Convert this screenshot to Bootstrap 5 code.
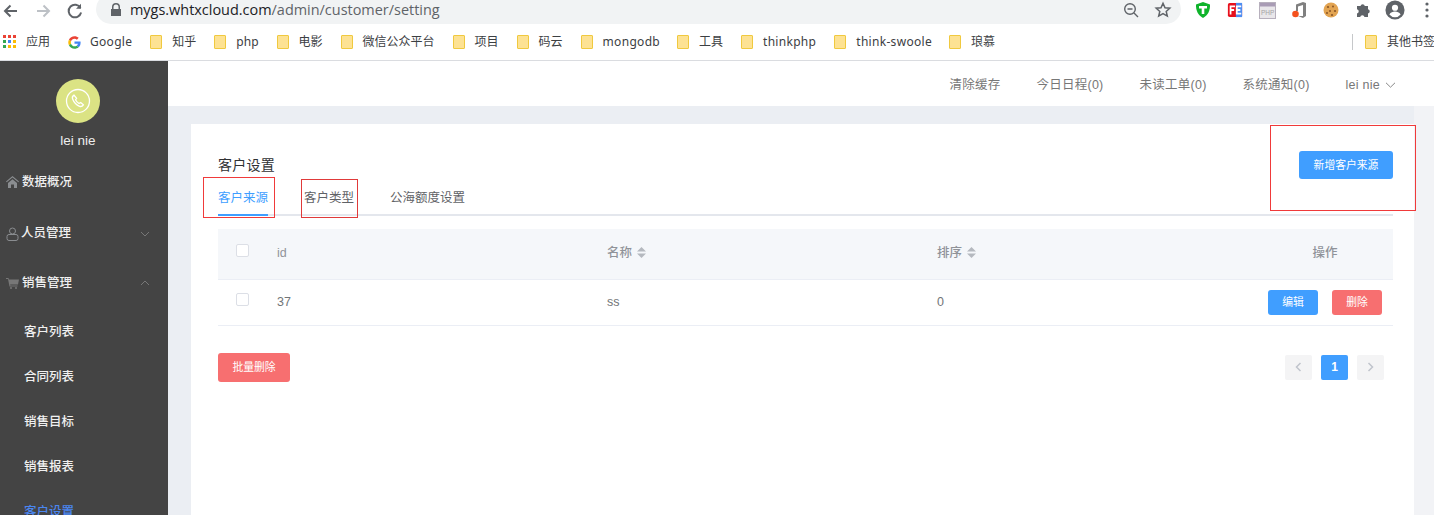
<!DOCTYPE html>
<html lang="zh">
<head>
<meta charset="utf-8">
<title>客户设置</title>
<link href="https://cdn.jsdelivr.net/npm/bootstrap@5.3.0/dist/css/bootstrap.min.css" rel="stylesheet">
<style>
html,body{height:515px;overflow:hidden}
body{font-family:"Liberation Sans","Noto Sans CJK SC",sans-serif;background:#fff;color:#606266;font-size:12.5px}
.tool-bar{height:24px;background:#fff;overflow:hidden}
.nav-ico{width:20px;height:20px;flex:none}
.addr-pill{width:1085px;height:30px;margin-top:-6px;background:#f1f3f4;border-radius:15px;padding:6px 9px 0 12px;color:#5f6368;font-family:"Open Sans","Noto Sans",sans-serif;font-size:14.45px;line-height:20px}
.addr-pill b{font-weight:400;color:#202124}
.ext-slot{width:32px;height:20px;flex:none;display:flex;align-items:center;justify-content:center}
.mark-bar{height:37px;padding-left:2px;border-bottom:1px solid #dadce0;font-family:"Noto Sans","Noto Sans CJK SC",sans-serif;font-size:12px;color:#3c4043}
.mark-item{display:flex;align-items:center;white-space:nowrap;flex:none}
.mark-latin{letter-spacing:.3px}
.folder{width:12px;height:14px;background:#fde293;border:1px solid #f0c93f;border-radius:1px;flex:none;margin-right:10px}
.mark-sep{width:1px;height:16px;background:#c6c8ca;margin:0 12px 0 0}
.app-shell{height:454px}
.side-nav{width:168px;flex:none;background:#444;color:#eee;overflow:hidden}
.avatar-dot{width:44px;height:44px;border-radius:50%;background:#dbe384;margin:18px 0 0 56px;display:flex;align-items:center;justify-content:center}
.who{width:156px;text-align:center;font-size:13.5px;line-height:18px;margin:9px 0 7px;color:#eee;height:18px}
.side-item{height:50px;display:flex;align-items:center;padding-left:6px;color:#f0f0f0;font-weight:500}
.side-item.tall{height:51px;padding-top:2px}
.side-item svg.lead-ico{margin-right:3px;flex:none}
.side-item .chev{margin-left:auto;margin-right:18px}
.side-sub{height:45px;display:flex;align-items:center;padding-left:24px;color:#f0f0f0;font-weight:500}
.side-sub.first{margin-top:2px}
.side-sub.on{color:#4a86f0}
.main-area{flex:1 1 0;min-width:0;background:#ebeef3}
.top-strip{height:45px;background:#fff;padding:3px 38px 0 0;color:#777;gap:36px;letter-spacing:.25px}
.content-row{height:409px;padding:18px 0 0 23px;background:linear-gradient(90deg,#ebeef3 1246px,#f2f3f6 1246px)}
.sheet{width:1223px;height:400px;background:#fff;padding:27px 21px 0 27px}
.sheet-title{font-size:14px;letter-spacing:.25px;color:#303133;line-height:20px;margin-top:4px;font-weight:400}
.tab-line{border-bottom:2px solid #e4e7ed;height:35px;gap:36px;margin-top:-18px;width:1175px}
.tab-one{height:35px;line-height:20px;padding-top:7px;color:#5f6266;flex:none}
.tab-one.on{color:#409eff;border-bottom:2px solid #409eff}
.data-grid{width:1175px;margin:13px 0 0;table-layout:fixed;border-collapse:collapse}
.data-grid th{height:50px;background:#f5f7fa;color:#909399;font-weight:500;vertical-align:middle;border-bottom:1px solid #ebeef5;padding:0}
.data-grid td{height:46px;color:#727578;vertical-align:middle;border-bottom:1px solid #ebeef5;padding:0;font-size:12.5px}
.tick{display:block;width:13px;height:13px;border:1px solid #dcdfe6;border-radius:2px;background:#fff;margin:-6px 0 0 18px}
.sort-arrows{display:inline-block;margin-left:5px;vertical-align:-1px}
.btn-flat{border:0;border-radius:3px;color:#fff;font-size:10.8px;line-height:1;padding:0}
.btn-blue{background:#409eff}
.btn-red{background:#f76f70}
.btn-add{width:94px;height:28px}
.btn-row{width:50px;height:25px}
.btn-bulk{width:72px;height:29px}
.foot-row{margin-top:27px;width:1175px}
.pager{gap:9px;margin-right:9px}
.page-cell{width:27px;height:25px;border-radius:2px;background:#f4f4f5;color:#c0c4cc;display:flex;align-items:center;justify-content:center;font-weight:700;font-size:12px}
.page-cell.on{background:#409eff;color:#fff}
.note-box{position:absolute;border:1px solid #f03a3a;pointer-events:none}
.note-a{left:203px;top:177px;width:72px;height:41px}
.note-b{left:301px;top:179px;width:57px;height:39px;border-color:#e03a3a}
.note-c{left:1270px;top:125px;width:146px;height:86px}
</style>
</head>
<body>
<div class="tool-bar d-flex align-items-start">
  <div class="d-flex" style="gap:12px;padding:1px 0 0 1px;width:96px">
    <svg class="nav-ico" viewBox="0 0 20 20" fill="none" stroke="#5f6368" stroke-width="2"><path d="M16 10H4M9.500 4.500 4 10l5.500 5.500"/></svg>
    <svg class="nav-ico" viewBox="0 0 20 20" fill="none" stroke="#bdc1c6" stroke-width="2"><path d="M4 10h12M10.500 4.500 16 10l-5.500 5.500"/></svg>
    <svg class="nav-ico" viewBox="0 0 20 20" fill="none" stroke="#5f6368" stroke-width="2"><path d="M15.500 7a6.300 6.300 0 1 0 .6 4.500"/><path d="M16 2.800v5h-5" fill="#5f6368" stroke="none"/></svg>
  </div>
  <div class="addr-pill d-flex align-items-start flex-shrink-0">
    <svg width="12" height="14" viewBox="0 0 12 14" style="margin:3px 8px 0 2px;flex:none"><path fill="#5f6368" d="M2 6V4a4 4 0 0 1 8 0v2h1v7H1V6zm1.500 0h5V4a2.500 2.500 0 0 0-5 0z"/></svg>
    <span><b>mygs.whtxcloud.com</b>/admin/customer/setting</span>
    <svg class="ms-auto" width="18" height="18" viewBox="0 0 18 18" fill="none" stroke="#5f6368" stroke-width="1.400" style="margin:1px 14px 0 0;flex:none"><circle cx="8" cy="8" r="5.300"/><path d="m12 12 4 4M5.500 8h5"/></svg>
    <svg width="18" height="18" viewBox="0 0 18 18" fill="none" stroke="#5f6368" stroke-width="1.500" style="margin:1px 0 0 0;flex:none"><path d="m9 2.300 2 4.500 4.800.4-3.600 3.200 1.100 4.700L9 12.600l-4.300 2.500 1.100-4.700L2.200 7.200 7 6.800z"/></svg>
  </div>
  <div class="d-flex align-items-center flex-shrink-0" style="padding:0 0 0 6px">
    <span class="ext-slot"><svg width="18" height="18" viewBox="0 0 18 18"><path fill="#0fb32b" d="M9 1l7 2.500c.2 6-1.800 10.500-7 13.500C3.800 14 1.800 9.500 2 3.500z"/><path fill="#fff" d="M5 5h8v2.500h-2.700V13H7.700V7.500H5z"/></svg></span>
    <span class="ext-slot"><svg width="16" height="16" viewBox="0 0 18 18"><rect x="1" y="1" width="16" height="16" rx="2" fill="#e8101c"/><rect x="10" y="1" width="7" height="16" fill="#4f8df0"/><path fill="#fff" d="M3 4h6v2H5v2h3v2H5v4H3zM10 4h6v2h-4v2h3v2h-3v2h4v2h-6z"/></svg></span>
    <span class="ext-slot"><svg width="17" height="17" viewBox="0 0 17 17"><rect x=".5" y=".5" width="16" height="16" fill="#e9e7ea" stroke="#b7b0bd"/><rect x="1" y="1" width="15" height="3.500" fill="#a99cb5"/><text x="2" y="13" font-size="6.500" font-family="Liberation Sans" fill="#a5a5a5">PHP</text></svg></span>
    <span class="ext-slot"><svg width="18" height="18" viewBox="0 0 18 18"><path fill="#808080" d="M6 3.500 13 1l3 1v13l-3 2-5-2h5V4L8 5.500V10H6z"/><circle cx="5.500" cy="13" r="3.300" fill="#f4511e"/></svg></span>
    <span class="ext-slot"><svg width="18" height="18" viewBox="0 0 18 18"><circle cx="9" cy="9" r="7.500" fill="#e2a452"/><g fill="#8a5526"><circle cx="6" cy="6" r="1.100"/><circle cx="11" cy="5.500" r="1"/><circle cx="13" cy="10" r="1.100"/><circle cx="8" cy="10" r="1"/><circle cx="5" cy="12" r="1"/><circle cx="10" cy="14" r="1.100"/></g></svg></span>
    <span class="ext-slot"><svg width="18" height="18" viewBox="0 0 18 18"><path fill="#5f6368" d="M3 5h3.500a2.200 2.200 0 0 1 4.300 0H14v3.200a2.200 2.200 0 0 1 0 4.300V16h-3.500a2.200 2.200 0 0 0-4.300 0H3v-3.500a2.200 2.200 0 0 0 0-4.300z"/></svg></span>
    <span class="ext-slot"><svg width="20" height="20" viewBox="0 0 22 22"><circle cx="11" cy="11" r="10.500" fill="#5f6368"/><circle cx="11" cy="8.500" r="3.400" fill="#fff"/><path fill="#fff" d="M4.800 16c1.500-2.400 3.800-3.300 6.200-3.300s4.700.9 6.200 3.300a8 8 0 0 1-12.400 0z"/></svg></span>
    <span class="ext-slot" style="width:14px;margin-left:9px"><svg width="4" height="16" viewBox="0 0 4 16"><g fill="#5f6368"><circle cx="2" cy="2" r="1.600"/><circle cx="2" cy="8" r="1.600"/><circle cx="2" cy="14" r="1.600"/></g></svg></span>
  </div>
</div>

<div class="mark-bar d-flex align-items-center">
  <div class="mark-item" style="margin-right:18px">
    <svg width="14" height="14" viewBox="0 0 14 14" style="margin:0 9px 0 1px"><g><rect x="0" y="0" width="3" height="3" fill="#ea4335"/><rect x="5" y="0" width="3" height="3" fill="#ea4335"/><rect x="10" y="0" width="3" height="3" fill="#ea4335"/><rect x="0" y="5" width="3" height="3" fill="#34a853"/><rect x="5" y="5" width="3" height="3" fill="#4285f4"/><rect x="10" y="5" width="3" height="3" fill="#fbbc05"/><rect x="0" y="10" width="3" height="3" fill="#34a853"/><rect x="5" y="10" width="3" height="3" fill="#fbbc05"/><rect x="10" y="10" width="3" height="3" fill="#fbbc05"/></g></svg>应用
  </div>
  <div class="mark-item mark-latin" style="margin-right:18px">
    <svg width="13" height="13" viewBox="0 0 48 48" style="margin-right:9px"><path fill="#ea4335" d="M24 10c3.500 0 6.500 1.300 8.900 3.500l6.600-6.600C35.500 3.200 30.200 1 24 1 15 1 7.300 6.100 3.500 13.600l7.700 6C13 14 18 10 24 10z"/><path fill="#4285f4" d="M46.500 24.500c0-1.600-.1-3.100-.4-4.500H24v9h12.700c-.5 3-2.200 5.500-4.700 7.200l7.300 5.700c4.300-4 7.200-9.900 7.200-17.400z"/><path fill="#fbbc05" d="M11.200 28.400A14 14 0 0 1 10.500 24c0-1.500.3-3 .7-4.400l-7.700-6A23 23 0 0 0 1 24c0 3.700.9 7.200 2.500 10.400z"/><path fill="#34a853" d="M24 47c6.200 0 11.400-2 15.300-5.600L32 35.700c-2 1.400-4.700 2.300-8 2.300-6 0-11-4-12.800-9.600l-7.700 6C7.300 41.900 15 47 24 47z"/></svg>Google
  </div>
  <div class="mark-item" style="margin-right:18px"><span class="folder"></span>知乎</div>
  <div class="mark-item" style="margin-right:18px"><span class="folder"></span>php</div>
  <div class="mark-item" style="margin-right:18px"><span class="folder"></span>电影</div>
  <div class="mark-item" style="margin-right:18px"><span class="folder"></span>微信公众平台</div>
  <div class="mark-item" style="margin-right:18px"><span class="folder"></span>项目</div>
  <div class="mark-item" style="margin-right:18px"><span class="folder"></span>码云</div>
  <div class="mark-item mark-latin" style="margin-right:17px"><span class="folder"></span>mongodb</div>
  <div class="mark-item" style="margin-right:18px"><span class="folder"></span>工具</div>
  <div class="mark-item mark-latin" style="margin-right:18px"><span class="folder"></span>thinkphp</div>
  <div class="mark-item mark-latin" style="margin-right:17px"><span class="folder"></span>think-swoole</div>
  <div class="mark-item"><span class="folder"></span>琅慕</div>
  <div class="mark-item ms-auto" style="margin-right:-1px"><span class="mark-sep"></span><span class="folder"></span>其他书签</div>
</div>

<div class="app-shell d-flex">
  <aside class="side-nav">
    <div class="avatar-dot">
      <svg width="26" height="26" viewBox="0 0 26 26" fill="none" stroke="#fff" stroke-width="1.300"><circle cx="13" cy="13" r="11.500"/><path d="M9 7c-1.500 1-2 2.400-1.400 4 1.300 3.300 3.800 6 7 7.300 1.500.5 2.800 0 3.800-1.500l-2.700-2.300-1.700 1c-1.500-.8-2.700-2-3.500-3.700l1.100-1.500z"/></svg>
    </div>
    <div class="who">lei nie</div>
    <div class="side-item"><svg class="lead-ico" width="13" height="12" viewBox="0 0 13 12"><path fill="#8a8d90" d="M6.500 0 13 5.500l-.7.800L6.500 1.500.7 6.300 0 5.500zM2 7l4.500-3.800L11 7v5H8V8.500H5V12H2z"/></svg>数据概况</div>
    <div class="side-item tall"><svg class="lead-ico" style="margin-right:2px" width="13" height="14" viewBox="0 0 13 14" fill="none" stroke="#8a8d90"><circle cx="6.500" cy="4" r="3"/><rect x="1" y="7.500" width="11" height="6" rx="2"/></svg>人员管理<svg class="chev" width="10" height="6" viewBox="0 0 10 6" fill="none" stroke="#777"><path d="m1 1 4 4 4-4"/></svg></div>
    <div class="side-item"><svg class="lead-ico" width="13" height="12" viewBox="0 0 13 12"><path fill="#777" d="M0 1h2.500l.4 1.500H13l-1 5H4.200l.2 1H11.500v1H3.500L2 2H0z"/><circle cx="5" cy="11" r="1" fill="#777"/><circle cx="10" cy="11" r="1" fill="#777"/></svg>销售管理<svg class="chev" width="10" height="6" viewBox="0 0 10 6" fill="none" stroke="#777"><path d="m1 5 4-4 4 4"/></svg></div>
    <div class="side-sub first">客户列表</div>
    <div class="side-sub">合同列表</div>
    <div class="side-sub">销售目标</div>
    <div class="side-sub">销售报表</div>
    <div class="side-sub on">客户设置</div>
  </aside>
  <main class="main-area">
    <div class="top-strip d-flex align-items-center justify-content-end">
      <span>清除缓存</span><span>今日日程(0)</span><span>未读工单(0)</span><span>系统通知(0)</span>
      <span class="d-flex align-items-center" style="gap:5px">lei nie<svg width="11" height="6" viewBox="0 0 11 6" fill="none" stroke="#888"><path d="m1 .8 4.500 4.400L10 .8"/></svg></span>
    </div>
    <div class="content-row">
      <section class="sheet">
        <div class="d-flex justify-content-between" style="height:48px;width:1175px">
          <div class="sheet-title">客户设置</div>
          <div><button class="btn-flat btn-blue btn-add">新增客户来源</button></div>
        </div>
        <div class="tab-line d-flex">
          <div class="tab-one on">客户来源</div>
          <div class="tab-one">客户类型</div>
          <div class="tab-one">公海额度设置</div>
        </div>
        <table class="data-grid">
          <colgroup><col style="width:59px"><col style="width:330px"><col style="width:330px"><col style="width:260px"><col></colgroup>
          <thead><tr>
            <th><span class="tick"></span></th><th>id</th>
            <th>名称<svg class="sort-arrows" width="9" height="11" viewBox="0 0 9 11"><path fill="#b5b9bf" d="M4.500 0 9 4.500H0zM4.500 11 0 6.500h9z"/></svg></th>
            <th>排序<svg class="sort-arrows" width="9" height="11" viewBox="0 0 9 11"><path fill="#b5b9bf" d="M4.500 0 9 4.500H0zM4.500 11 0 6.500h9z"/></svg></th>
            <th class="text-center" style="padding-left:60px">操作</th>
          </tr></thead>
          <tbody><tr>
            <td><span class="tick"></span></td><td>37</td><td>ss</td><td>0</td>
            <td><div class="d-flex justify-content-end" style="gap:14px;padding-right:11px"><button class="btn-flat btn-blue btn-row">编辑</button><button class="btn-flat btn-red btn-row">删除</button></div></td>
          </tr></tbody>
        </table>
        <div class="foot-row d-flex justify-content-between align-items-center">
          <button class="btn-flat btn-red btn-bulk">批量删除</button>
          <div class="pager d-flex">
            <div class="page-cell"><svg width="7" height="10" viewBox="0 0 7 10" fill="none" stroke="#c0c4cc" stroke-width="1.500"><path d="M5.500 1 1.500 5l4 4"/></svg></div>
            <div class="page-cell on">1</div>
            <div class="page-cell"><svg width="7" height="10" viewBox="0 0 7 10" fill="none" stroke="#c0c4cc" stroke-width="1.500"><path d="m1.500 1 4 4-4 4"/></svg></div>
          </div>
        </div>
      </section>
    </div>
  </main>
</div>
<div class="note-box note-a"></div>
<div class="note-box note-b"></div>
<div class="note-box note-c"></div>
<script src="https://cdn.jsdelivr.net/npm/bootstrap@5.3.0/dist/js/bootstrap.bundle.min.js"></script>
</body>
</html>
